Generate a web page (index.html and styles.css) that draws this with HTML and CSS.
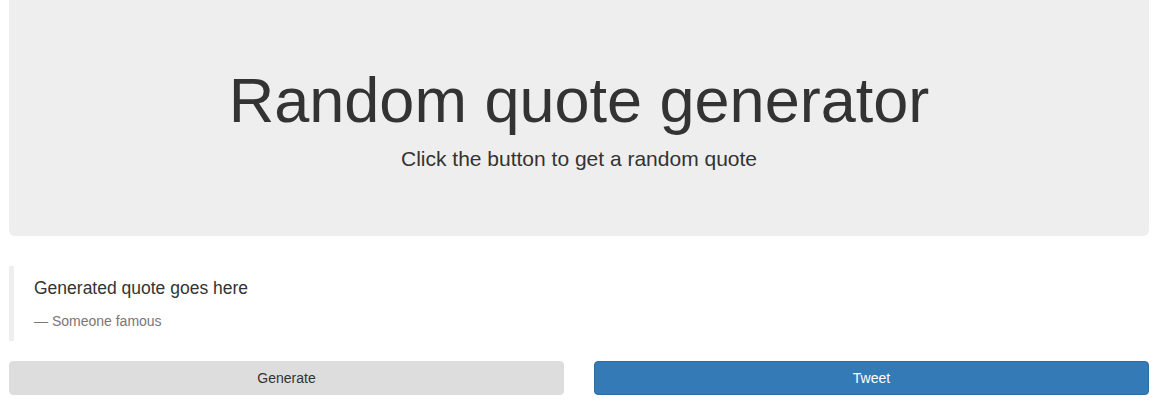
FILE: index.html
```html
<!DOCTYPE html>
<html>
<head>
<meta charset="utf-8">
<title>Random quote generator</title>
<link rel="stylesheet" href="styles.css">
</head>
<body>
<div class="page">
  <header class="jumbotron">
    <h1 class="title">Random quote generator</h1>
    <p class="lead">Click the button to get a random quote</p>
  </header>
  <blockquote class="quote">
    <p class="quote-text">Generated quote goes here</p>
    <footer class="quote-author">— Someone famous</footer>
  </blockquote>
  <div class="actions">
    <button class="btn btn-default" type="button">Generate</button>
    <button class="btn btn-primary" type="button">Tweet</button>
  </div>
</div>
</body>
</html>
```

FILE: styles.css
```css
* { box-sizing: border-box; }
html, body { margin: 0; padding: 0; background: #fff; }
body {
  font-family: "Liberation Sans", Arial, Helvetica, sans-serif;
  font-size: 14px;
  line-height: 1.42857143;
  color: #333;
}
.page {
  padding: 0 10px 0 9px;
}
.jumbotron {
  background: #eee;
  border-radius: 0 0 6px 6px;
  height: 236px;
  padding-top: 66px;
  text-align: center;
  margin-bottom: 30px;
}
.title {
  font-size: 63px;
  font-weight: 500;
  line-height: 1.1;
  margin: 0 0 9px;
  color: #333;
}
.lead {
  font-size: 21px;
  font-weight: 300;
  line-height: 30px;
  margin: 0;
}
.quote {
  margin: 0 0 20px;
  padding: 10px 20px;
  border-left: 5px solid #eee;
  font-size: 17.5px;
}
.quote-text {
  margin: 0 0 10px;
  line-height: 25px;
}
.quote-author {
  font-size: 14px;
  line-height: 20px;
  color: #777;
}
.actions {
  display: grid;
  grid-template-columns: 1fr 1fr;
  gap: 30px;
}
.btn {
  font-family: inherit;
  font-size: 14px;
  line-height: 20px;
  height: 34px;
  padding: 6px 12px;
  border-radius: 4px;
  border: 1px solid transparent;
  cursor: pointer;
}
.btn-default {
  background: #ddd;
  border-color: #ddd;
  color: #333;
}
.btn-primary {
  background: #337ab7;
  border-color: #2e6da4;
  color: #fff;
}
```
